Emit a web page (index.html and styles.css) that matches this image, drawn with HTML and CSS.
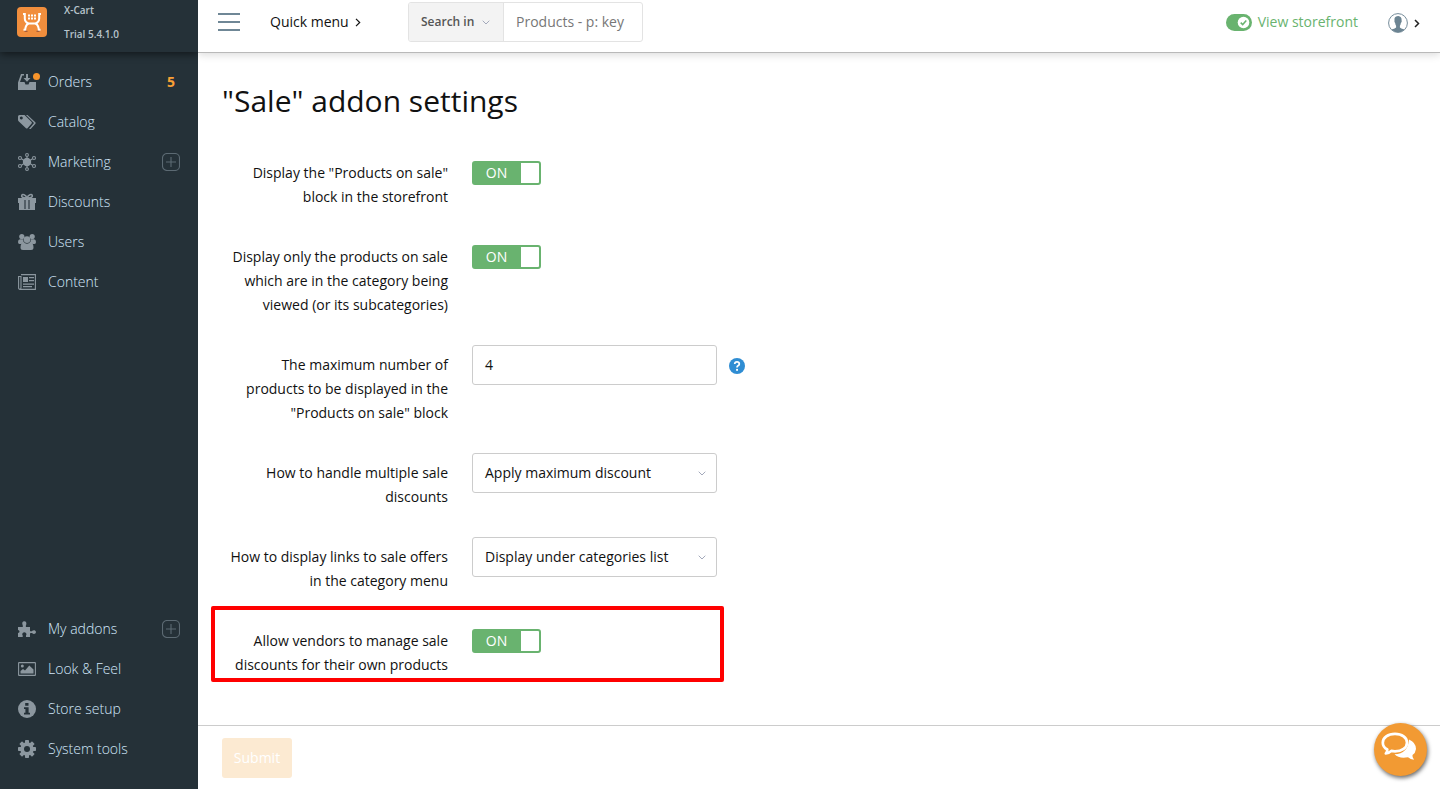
FILE: index.html
```html
<!DOCTYPE html>
<html lang="en">
<head>
<meta charset="utf-8">
<title>"Sale" addon settings</title>
<link rel="stylesheet" href="styles.css">
</head>
<body>
<div class="app">
  <aside class="sidebar">
    <div class="brand">
      <svg class="logo" width="30" height="30" viewBox="0 0 30 30"><rect width="30" height="30" rx="4" fill="#f18e3d"/><g fill="none" stroke="#fff" stroke-width="2"><path d="M6 7H7.800V11.500Q7.800 15 11.500 16.500H18.500Q22.200 15 22.200 11.500V7H24"/><path d="M11.500 16.500Q8.500 18 8.200 22.800H6.500M18.500 16.500Q21.500 18 21.800 22.800H23.500"/></g><g fill="#fff"><path d="M11 7.500h2v2h-2zM14 7.500h2v2h-2zM17 7.500h2v2h-2zM11 10.500h2v2h-2zM14 10.500h2v2h-2zM17 10.500h2v2h-2z"/></g><path d="M7.500 24.300h3M19.500 24.300h3" stroke="#a55d38" stroke-width="1.300"/></svg>
      <div class="brand-text"><div>X-Cart</div><div>Trial 5.4.1.0</div></div>
    </div>
    <nav class="nav">
      <a class="item"><svg class="icon" viewBox="0 0 18 18"><path d="M3 1h3v1.500H4.300L2 9H6.500l1 2.500h3L11.500 9H18v8H0V9.500z"/><path d="M8 1h2v4h2.500L9 8.700 5.500 5H8z"/><circle class="dot" cx="18.500" cy="3.500" r="3.500"/></svg><span>Orders</span><b class="count">5</b></a>
      <a class="item"><svg class="icon" viewBox="0 0 18 18"><path fill-rule="evenodd" d="M0 3.500Q0 2 1.500 2H6.500L13.600 9.100Q14.300 9.800 13.600 10.500L9.500 15.200Q8.800 15.900 8 15.200L.6 8.200Q0 7.600 0 6.800zM3.300 3.600a1.500 1.500 0 1 0 .01 0z"/><path d="M8 2h1.500l7.800 7.200q.8.800.1 1.600L12.700 16H11l5-5.900z"/></svg><span>Catalog</span></a>
      <a class="item"><svg class="icon" viewBox="0 0 18 18"><circle cx="9" cy="9" r="4.200"/><path class="line" d="M9 3v3M9 12v3M3.500 5.800 6 7.500M14.500 5.800 12 7.500M3.500 12.200 6 10.500M14.500 12.200 12 10.500"/><g class="line"><circle cx="9" cy="1.900" r="1.400"/><circle cx="9" cy="16.100" r="1.400"/><circle cx="2" cy="5" r="1.500"/><circle cx="16" cy="5" r="1.500"/><circle cx="2" cy="13" r="1.500"/><circle cx="16" cy="13" r="1.500"/></g></svg><span>Marketing</span><svg class="plus" viewBox="0 0 18 18"><rect x=".5" y=".5" width="17" height="17" rx="4.500"/><path d="M4 9h10M9 4v10"/></svg></a>
      <a class="item"><svg class="icon" viewBox="0 0 18 18"><path d="M0 5h18v5h-1v7H1v-7H0z"/><path class="cut" d="M7 7V16M11 7V16"/><path class="line thick" d="M8.500 5C4 5 3.300 3.500 3.800 2.300S7.500 1 9 5C10.500 1 13.700 1.100 14.200 2.300S14 5 9.500 5"/></svg><span>Discounts</span></a>
      <a class="item"><svg class="icon" viewBox="0 0 18 18"><circle cx="3.800" cy="3.500" r="2.600"/><circle cx="14.200" cy="3.500" r="2.600"/><path d="M0 9Q0 6.300 2 6.300H5Q5 9 7 10L3 11H1.500Q0 11 0 9zM18 9Q18 6.300 16 6.300H13Q13 9 11 10L15 11H16.500Q18 11 18 9z"/><circle cx="9" cy="6.600" r="3.400"/><path d="M2.500 14.500Q2.500 10 5.500 9.600Q9 11.700 12.500 9.600Q15.500 10 15.500 14.500Q15.500 17 13 17H5Q2.500 17 2.500 14.500z"/></svg><span>Users</span></a>
      <a class="item"><svg class="icon" viewBox="0 0 18 18"><path class="line" d="M3 1.600h14.400v14.800H2Q.6 16.400.6 14.800V3.500H3V14.500Q3 16.400 1.800 16.400"/><path d="M5 4h5v5H5zM11 4h5v1.200h-5zM11 7h5v1.200h-5zM5 10.500h11v1.200H5zM5 13h9v1.200H5z"/></svg><span>Content</span></a>
    </nav>
    <nav class="nav nav-bottom">
      <a class="item"><svg class="icon" viewBox="0 0 18 18"><path d="M0 7H4.700Q5.200 6 4.500 4.800Q3.500 1.500 6.300 1.200Q9 1.500 8.200 4.800Q7.400 6 8 7H12V11Q13 11.700 14 11.100Q15 10 16.500 10.200Q18 10.700 18 12.200Q17.700 14 16 14Q15 14 14 13Q13 12.700 12 13.300V17H8V15.500Q9 14 8 13Q6.300 11.700 4.700 13Q3.700 14 4.700 15.500V17H0V13Q1.600 12.700 1.500 11.500Q1.500 10.200 0 10z"/></svg><span>My addons</span><svg class="plus" viewBox="0 0 18 18"><rect x=".5" y=".5" width="17" height="17" rx="4.500"/><path d="M4 9h10M9 4v10"/></svg></a>
      <a class="item"><svg class="icon" viewBox="0 0 18 18"><rect class="line" x=".6" y="2.600" width="16.800" height="12.800" rx=".5"/><circle cx="4.300" cy="6" r="1.500"/><path d="M2.500 13.500V11L5 9l2 1.500L11.300 5.500 15.500 9.500v4z"/></svg><span>Look &amp; Feel</span></a>
      <a class="item"><svg class="icon" viewBox="0 0 18 18"><circle cx="9" cy="9" r="9"/><path class="hole" d="M7.200 3h3.300v2.700H7.200zM6 7.200h4.600v5.600H12V14.600H6V12.800h1.400V9H6z"/></svg><span>Store setup</span></a>
      <a class="item"><svg class="icon" viewBox="0 0 18 18"><g><rect x="7" y="0" width="4" height="18" rx=".8"/><rect x="7" y="0" width="4" height="18" rx=".8" transform="rotate(45 9 9)"/><rect x="7" y="0" width="4" height="18" rx=".8" transform="rotate(90 9 9)"/><rect x="7" y="0" width="4" height="18" rx=".8" transform="rotate(135 9 9)"/></g><circle cx="9" cy="9" r="6.700"/><circle class="hole" cx="9" cy="9" r="3"/></svg><span>System tools</span></a>
    </nav>
  </aside>
  <div class="content">
    <header class="topbar">
      <svg class="burger" width="22" height="18" viewBox="0 0 22 18"><path d="M0 1h22M0 9h22M0 17h22" stroke="#6f8796" stroke-width="2"/></svg>
      <div class="quick">Quick menu<svg width="6" height="9" viewBox="0 0 6 9"><path d="M1 .8 4.700 4.500 1 8.200" fill="none" stroke="#111" stroke-width="1.200"/></svg></div>
      <div class="search"><div class="search-in">Search in<svg width="8" height="5" viewBox="0 0 8 5"><path d="m.7.700 3.300 3.300L7.300.7" fill="none" stroke="#a3a9bb"/></svg></div><div class="search-field">Products - p: key</div></div>
      <a class="storefront"><svg width="26" height="17" viewBox="0 0 26 17"><rect width="26" height="17" rx="8.500" fill="#69b36f"/><circle cx="17.500" cy="8.500" r="5.800" fill="#fff"/><path d="m14.700 8.600 2 2 3.600-4" fill="none" stroke="#69b36f" stroke-width="1.500"/></svg>View storefront</a>
      <div class="account"><svg width="20" height="20" viewBox="0 0 20 20"><circle cx="10" cy="10" r="9.400" fill="#fff" stroke="#748b99"/><path fill="#6c8492" d="M6.500 5.500Q7 3 10.300 3Q13.800 3.500 13.600 7Q14.200 9 12.800 10.200Q12.600 12 11.900 12.700V14.500Q12.500 15.500 16.500 16.500Q13.800 19.300 10 19.300Q6.200 19.300 3.500 16.500Q7.500 15.500 8.100 14.500V12.700Q7.400 12 7.200 10.200Q6 9 6.500 7z"/></svg><svg class="caret" width="6" height="9" viewBox="0 0 6 9"><path d="M1 1 4.500 4.500 1 8" fill="none" stroke="#222" stroke-width="1.500"/></svg></div>
    </header>
    <main class="page">
      <h1>"Sale" addon settings</h1>
      <div class="form">
        <div class="row"><div class="label">Display the "Products on sale"<br>block in the storefront</div><div class="toggle"><span>ON</span></div></div>
        <div class="row"><div class="label">Display only the products on sale<br>which are in the category being<br>viewed (or its subcategories)</div><div class="toggle"><span>ON</span></div></div>
        <div class="row"><div class="label">The maximum number of<br>products to be displayed in the<br>"Products on sale" block</div><div class="field">4</div><svg class="help" width="16" height="16" viewBox="0 0 16 16"><circle cx="8" cy="8" r="8" fill="#2f8dd3"/><path d="M5.700 6Q5.800 3.900 8 3.900T10.300 5.900Q10.300 7 9 7.700Q8 8.300 8 9.600" fill="none" stroke="#fff" stroke-width="1.700"/><rect x="7.100" y="10.900" width="1.900" height="1.900" fill="#fff"/></svg></div>
        <div class="row"><div class="label">How to handle multiple sale<br>discounts</div><div class="field">Apply maximum discount<svg width="8" height="5" viewBox="0 0 8 5"><path d="m.7.700 3.300 3.300L7.300.7" fill="none" stroke="#a3a9bb"/></svg></div></div>
        <div class="row"><div class="label">How to display links to sale offers<br>in the category menu</div><div class="field">Display under categories list<svg width="8" height="5" viewBox="0 0 8 5"><path d="m.7.700 3.300 3.300L7.300.7" fill="none" stroke="#a3a9bb"/></svg></div></div>
        <div class="row marked"><div class="label">Allow vendors to manage sale<br>discounts for their own products</div><div class="toggle"><span>ON</span></div></div>
      </div>
    </main>
    <footer class="actions"><div class="submit">Submit</div></footer>
  </div>
</div>
<div class="chat"><svg width="36" height="30" viewBox="0 0 36 30"><path fill="#fff" d="M28 7.500Q35 10.500 35 17Q34.500 21 31.500 23Q31 25.500 33 27.700Q29.500 27.500 27 25.300Q18 27 13.500 22.300Q27 22 28 7.500z"/><path d="M14 1.800C21 1.800 26 5.700 26 10.700S21 19.300 14 19.300Q12 19.300 10.300 18.900Q8 21.300 4.800 21.500Q6.500 19.500 6.300 17.500Q1.800 15 1.800 10.700C1.800 5.700 7 1.800 14 1.800z" fill="#f29a33" stroke="#fff" stroke-width="2.700" stroke-linejoin="round"/></svg></div>
</body>
</html>
```
FILE: styles.css
```css
*, *::before, *::after { box-sizing: border-box; }
body { margin: 0; background: #fff; color: #111; font: 14px/24px "Open Sans", sans-serif; overflow: hidden; }
svg { display: block; flex: none; }
.app { display: flex; height: 789px; }

.sidebar { width: 198px; flex: none; background: #253138; display: flex; flex-direction: column; padding-bottom: 20px; }
.brand { height: 52px; flex: none; display: flex; padding: 0 17px; box-shadow: 0 2px 8px rgba(0,0,0,.55); clip-path: inset(0 0 -12px 0); }
.logo { margin-top: 7px; }
.brand-text { margin: -2px 0 0 17px; font-size: 10px; font-weight: 600; color: #b8c4cc; white-space: nowrap; }
.nav { padding-top: 10px; }
.nav-bottom { margin-top: auto; padding-top: 0; }
.item { height: 40px; display: flex; align-items: center; padding: 0 18px; color: #d3e8fb; font-weight: 300; }
.icon { width: 18px; height: 18px; margin-right: 12px; fill: #8c979f; overflow: visible; }
.icon .line { fill: none; stroke: #8c979f; stroke-width: 1.1; }
.icon .thick { stroke-width: 1.6; }
.icon .cut { fill: none; stroke: #253138; stroke-width: 1.1; }
.icon .hole { fill: #253138; }
.icon .dot { fill: #f7942b; }
.count { margin-left: auto; margin-right: 5px; color: #f9a035; font-weight: 700; }
.plus { width: 18px; height: 18px; margin-left: auto; fill: none; stroke: #5c6a73; stroke-width: 1.1; }

.content { flex: 1; min-width: 0; display: flex; flex-direction: column; }
.topbar { height: 53px; flex: none; border-bottom: 1px solid #b9b9b9; box-shadow: 0 2px 8px rgba(0,0,0,.14); clip-path: inset(0 0 -14px 0); display: flex; align-items: flex-start; padding: 0 20px; }
.burger { margin-top: 13px; }
.quick { width: 138px; margin: 10px 0 0 30px; display: flex; align-items: center; gap: 6px; }
.search { height: 40px; width: 235px; margin-top: 2px; display: flex; border: 1px solid #e3e3e3; border-radius: 3px; overflow: hidden; }
.search-in { width: 95px; background: #f3f3f3; border-right: 1px solid #e3e3e3; padding-left: 12px; display: flex; align-items: center; gap: 8px; font-size: 12px; font-weight: 600; color: #555; white-space: nowrap; }
.search-field { padding-left: 12px; line-height: 38px; color: #777; white-space: nowrap; }
.storefront { margin: 10px 0 0 auto; display: flex; align-items: center; gap: 6px; color: #69b36f; white-space: nowrap; }
.account { display: flex; align-items: center; gap: 6px; margin: 13px 0 0 30px; }

.page { flex: 1; padding: 28px 24px 0; }
h1 { margin: 0; font-size: 30px; line-height: 40px; font-weight: 400; }
.form { margin-top: 40px; display: flex; flex-direction: column; gap: 36px; }
.row { display: flex; align-items: flex-start; position: relative; }
.label { width: 226px; flex: none; text-align: right; white-space: nowrap; }
.toggle { width: 69px; height: 24px; margin-left: 24px; border: 2px solid #69b36f; border-radius: 3px; background: linear-gradient(90deg, #69b36f 47px, #fff 47px); }
.toggle span { display: block; width: 45px; text-align: center; line-height: 20px; color: #fff; }
.field { width: 245px; height: 40px; margin: -8px 0 0 24px; padding: 0 10px 0 12px; border: 1px solid #ccc; border-radius: 3px; display: flex; align-items: center; justify-content: space-between; white-space: nowrap; }
.help { margin: 5px 0 0 12px; }
/* highlight frame drawn over the row */
.marked::after { content: ""; position: absolute; left: -11px; top: -23px; width: 513px; height: 76px; border: 4px solid #f00; border-radius: 2px; }
.actions { height: 64px; flex: none; border-top: 1px solid #ccc; padding: 12px 24px; }
.submit { width: 70px; height: 40px; border-radius: 3px; background: #fcead2; color: #fff; text-align: center; line-height: 40px; font-weight: 500; }
.chat { position: absolute; left: 1374px; top: 723px; width: 53px; height: 53px; border-radius: 50%; background: #f29a33; box-shadow: 1px 2px 4px rgba(0,0,0,.6); padding: 9px 0 0 7px; }
```
